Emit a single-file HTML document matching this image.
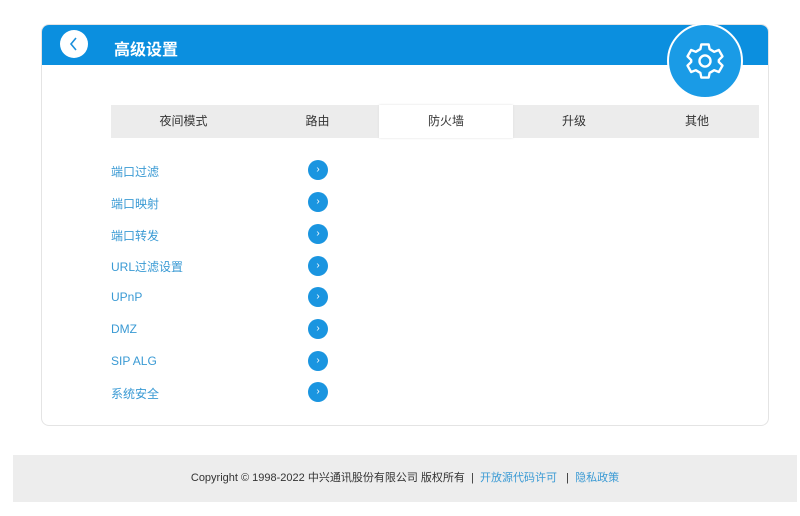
<!DOCTYPE html>
<html><head><meta charset="utf-8"><style>
body{margin:0;width:800px;height:516px;background:#fff;font-family:"Liberation Sans","Noto Sans CJK SC",sans-serif;position:relative;overflow:hidden}
.card{position:absolute;left:41px;top:24px;width:726px;height:400px;border:1px solid #e4e4e4;border-radius:8px;overflow:hidden;background:#fff}
.hdr{position:absolute;left:0;top:0;width:100%;height:40px;background:#0b8fdf}
.back{position:absolute;left:18px;top:5px;width:28px;height:28px;border-radius:50%;background:#fff}
.title{position:absolute;left:72px;top:11px;color:#fff;font-size:16px;font-weight:bold}
.gear{position:absolute;left:667px;top:23px;width:76px;height:76px;border-radius:50%;background:#1a9be6;border:2px solid #fff;box-sizing:border-box}
.tabs{position:absolute;left:111px;top:105px;width:648px;height:33px;background:#ececec}
.tabs div{position:absolute;top:0;height:33px;text-align:center;line-height:33px;font-size:12px;color:#333}
.tabs .on{background:#fff;box-shadow:0 0 2px #ddd}
.row{position:absolute;left:111px;font-size:12px;color:#3a9ad4}
.dot{position:absolute;left:308px;width:20px;height:20px;border-radius:50%;background:#1a95e0;color:#fff;font-size:10px;text-align:center;line-height:20px}
.foot{position:absolute;left:13px;top:455px;width:784px;height:47px;background:#ededed;text-align:center;line-height:46px;font-size:11px;color:#333}
.foot a{color:#3a9ad4;text-decoration:none}
</style></head><body>
<div class="card"><div class="hdr"><div class="back"><svg width="28" height="28"><path d="M16 8 L11 14 L16 20" stroke="#1a8fdc" stroke-width="1.6" fill="none"/></svg></div><div class="title">高级设置</div></div></div>
<div class="gear"><svg width="72" height="72" viewBox="0 0 72 72"><g transform="translate(36,36) scale(0.92)" fill="none" stroke="#fff" stroke-width="2.6" stroke-linejoin="round"><path d="M-4,-18 L4,-18 L5,-13 L10,-10 L15,-12 L19,-5 L15,-1 L15,1 L19,5 L15,12 L10,10 L5,13 L4,18 L-4,18 L-5,13 L-10,10 L-15,12 L-19,5 L-15,1 L-15,-1 L-19,-5 L-15,-12 L-10,-10 L-5,-13 Z"/><circle r="6"/></g></svg></div>
<div class="tabs"><div style="left:0;width:145px">夜间模式</div><div style="left:145px;width:123px">路由</div><div class="on" style="left:268px;width:134px">防火墙</div><div style="left:402px;width:122px">升级</div><div style="left:524px;width:124px">其他</div></div>
<div class="row" style="top:163px">端口过滤</div><div class="dot" style="top:160px">›</div>
<div class="row" style="top:195px">端口映射</div><div class="dot" style="top:192px">›</div>
<div class="row" style="top:227px">端口转发</div><div class="dot" style="top:224px">›</div>
<div class="row" style="top:258px">URL过滤设置</div><div class="dot" style="top:256px">›</div>
<div class="row" style="top:290px">UPnP</div><div class="dot" style="top:287px">›</div>
<div class="row" style="top:322px">DMZ</div><div class="dot" style="top:319px">›</div>
<div class="row" style="top:354px">SIP ALG</div><div class="dot" style="top:351px">›</div>
<div class="row" style="top:385px">系统安全</div><div class="dot" style="top:382px">›</div>
<div class="foot">Copyright © 1998-2022 中兴通讯股份有限公司 版权所有 &nbsp;|&nbsp; <a>开放源代码许可</a> &nbsp; | &nbsp;<a>隐私政策</a></div>
</body></html>
